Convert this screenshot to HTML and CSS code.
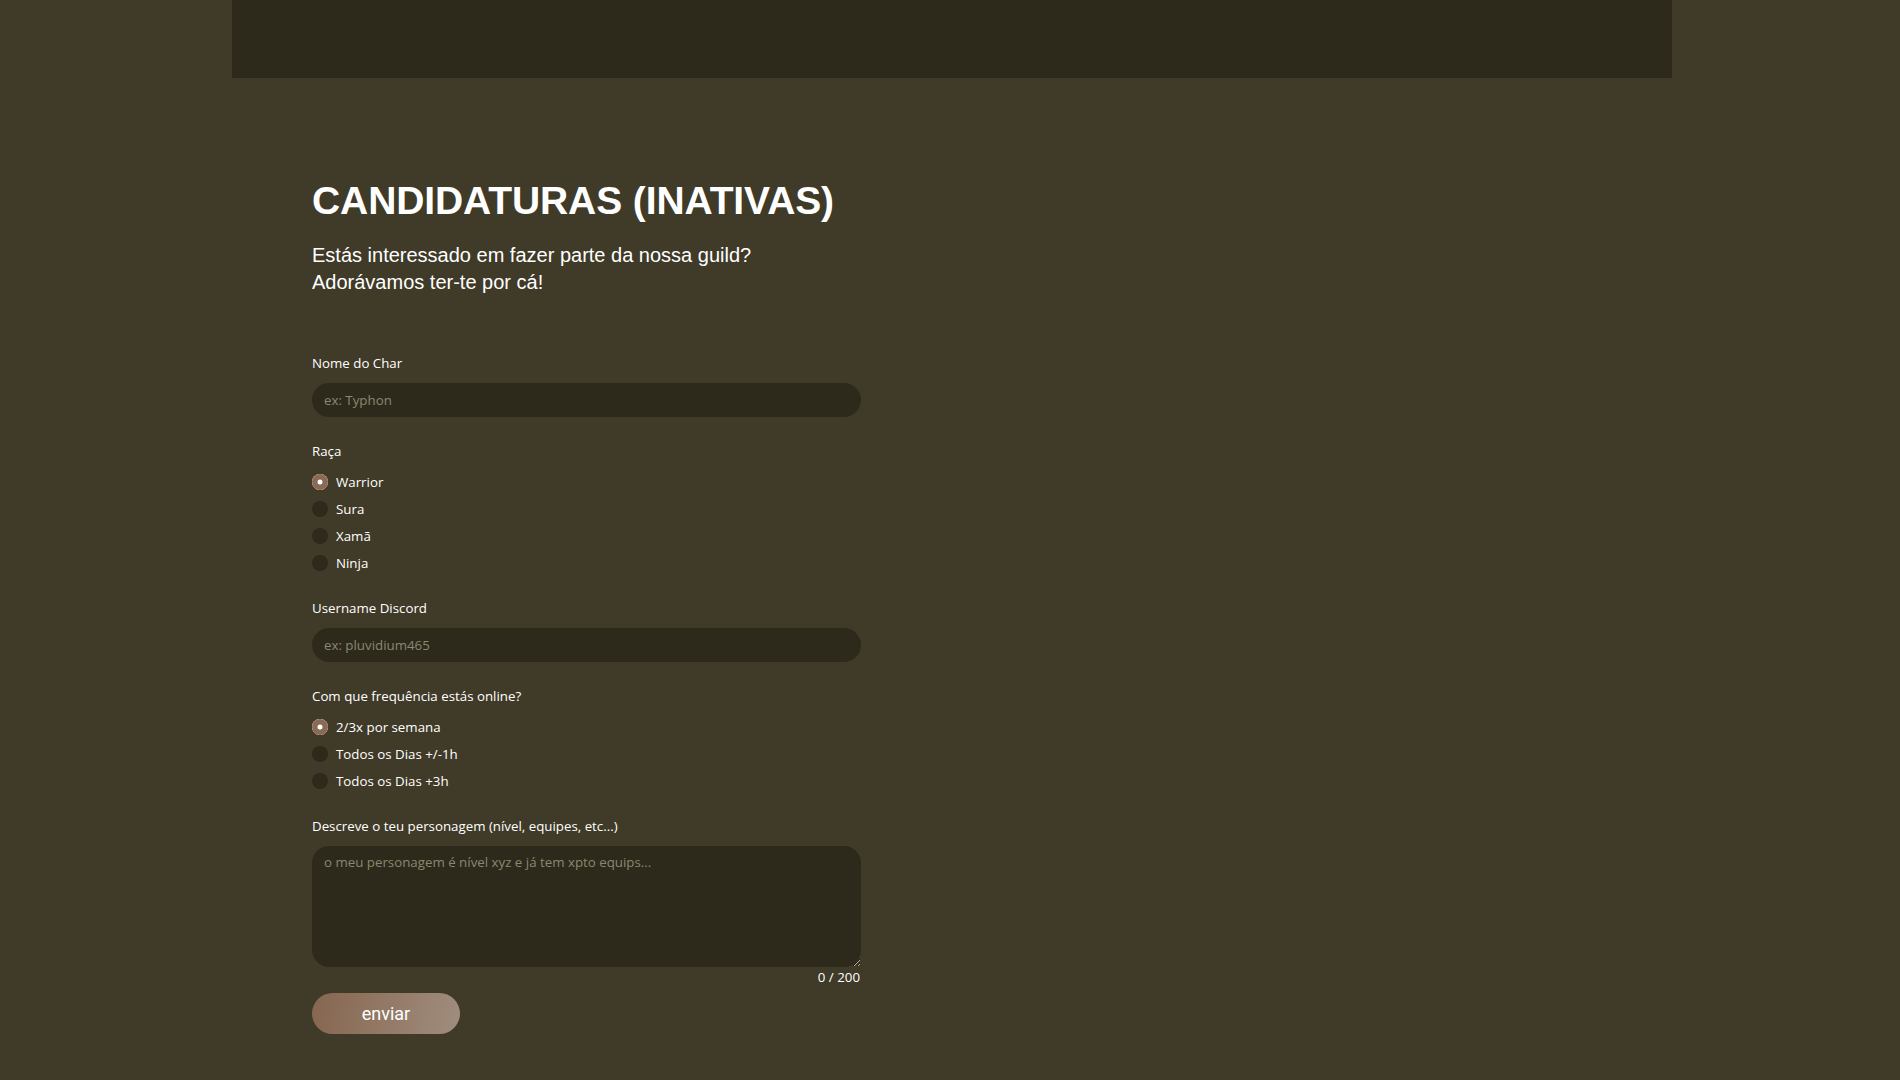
FILE: index.html
```html
<!DOCTYPE html>
<html lang="pt">
<head>
<meta charset="utf-8">
<title>Candidaturas</title>
<link rel="stylesheet" href="styles.css">
</head>
<body>
<header class="topbar"></header>
<main class="page">
  <h1 class="title">CANDIDATURAS (INATIVAS)</h1>
  <p class="intro">Estás interessado em fazer parte da nossa guild?<br>Adorávamos ter-te por cá!</p>
  <form class="form">
    <div class="group">
      <label class="label" for="nome">Nome do Char</label>
      <input class="field" id="nome" type="text" placeholder="ex: Typhon">
    </div>
    <div class="group">
      <span class="label">Raça</span>
      <div class="options">
        <label class="option"><input type="radio" name="raca" checked><span class="dot"></span>Warrior</label>
        <label class="option"><input type="radio" name="raca"><span class="dot"></span>Sura</label>
        <label class="option"><input type="radio" name="raca"><span class="dot"></span>Xamã</label>
        <label class="option"><input type="radio" name="raca"><span class="dot"></span>Ninja</label>
      </div>
    </div>
    <div class="group">
      <label class="label" for="discord">Username Discord</label>
      <input class="field" id="discord" type="text" placeholder="ex: pluvidium465">
    </div>
    <div class="group">
      <span class="label">Com que frequência estás online?</span>
      <div class="options">
        <label class="option"><input type="radio" name="freq" checked><span class="dot"></span>2/3x por semana</label>
        <label class="option"><input type="radio" name="freq"><span class="dot"></span>Todos os Dias +/-1h</label>
        <label class="option"><input type="radio" name="freq"><span class="dot"></span>Todos os Dias +3h</label>
      </div>
    </div>
    <div class="group">
      <label class="label" for="desc">Descreve o teu personagem (nível, equipes, etc...)</label>
      <div class="area-wrap">
        <textarea class="area" id="desc" placeholder="o meu personagem é nível xyz e já tem xpto equips..."></textarea>
        <span class="counter">0 / 200</span>
      </div>
    </div>
    <button class="submit" type="button">enviar</button>
  </form>
</main>
</body>
</html>
```
FILE: styles.css
```css
* { box-sizing: border-box; }
html, body {
  margin: 0;
  background: #403a28;
}
body {
  padding-left: 4px;
  min-height: 1080px;
  font-family: "Open Sans", "Noto Sans", sans-serif;
  color: #ffffff;
}
.topbar {
  width: 1440px;
  height: 78px;
  margin: 0 auto;
  background: #2d2a1c;
}
.page {
  width: 1440px;
  margin: 0 auto;
  padding: 99px 0 0 80px;
}
.title {
  margin: 0;
  font-family: "Liberation Sans", sans-serif;
  font-weight: 700;
  font-size: 39px;
  line-height: 48px;
  letter-spacing: -0.1px;
}
.intro {
  margin: 17px 0 0;
  font-family: "Liberation Sans", sans-serif;
  font-size: 20px;
  line-height: 27px;
}
.form {
  width: 549px;
  margin-top: 58px;
  display: flex;
  flex-direction: column;
  gap: 25px;
}
.group {
  display: flex;
  flex-direction: column;
  gap: 10px;
}
.label {
  font-size: 13.3px;
  line-height: 19px;
}
.field {
  height: 34px;
  border: 0;
  border-radius: 17px;
  background: #2d2a1c;
  padding: 0 12px;
  font-family: "Open Sans", sans-serif;
  font-size: 13.3px;
  color: #ffffff;
  outline: none;
}
.field::placeholder, .area::placeholder {
  color: #8b8770;
}
.options {
  display: flex;
  flex-direction: column;
  gap: 5px;
}
.option {
  display: flex;
  align-items: center;
  gap: 8px;
  height: 22px;
  font-size: 13.3px;
}
.option input {
  position: absolute;
  opacity: 0;
  width: 0;
  height: 0;
}
.dot {
  width: 16px;
  height: 16px;
  border-radius: 50%;
  background: #2d2a1c;
  flex: none;
}
.option input:checked + .dot {
  background: #8a6a55;
  box-shadow: inset 0 0 0 5.5px #8a6a55, inset 0 0 0 8px #ffffff;
}
.area-wrap {
  display: flex;
  flex-direction: column;
}
.area {
  height: 121px;
  border: 0;
  border-radius: 17px;
  background: #2d2a1c;
  padding: 7px 12px;
  font-family: "Open Sans", sans-serif;
  font-size: 13.3px;
  color: #ffffff;
  outline: none;
  resize: vertical;
}
.counter {
  align-self: flex-end;
  font-size: 13.3px;
  line-height: 20px;
  padding-right: 1px;
}
.submit {
  align-self: flex-start;
  margin-top: -19px;
  width: 148px;
  height: 41px;
  border: 0;
  border-radius: 21px;
  background: linear-gradient(100deg, #86664f 0%, #a08d7e 100%);
  color: #ffffff;
  font-family: Roboto, sans-serif;
  font-size: 18px;
  cursor: pointer;
}
```
